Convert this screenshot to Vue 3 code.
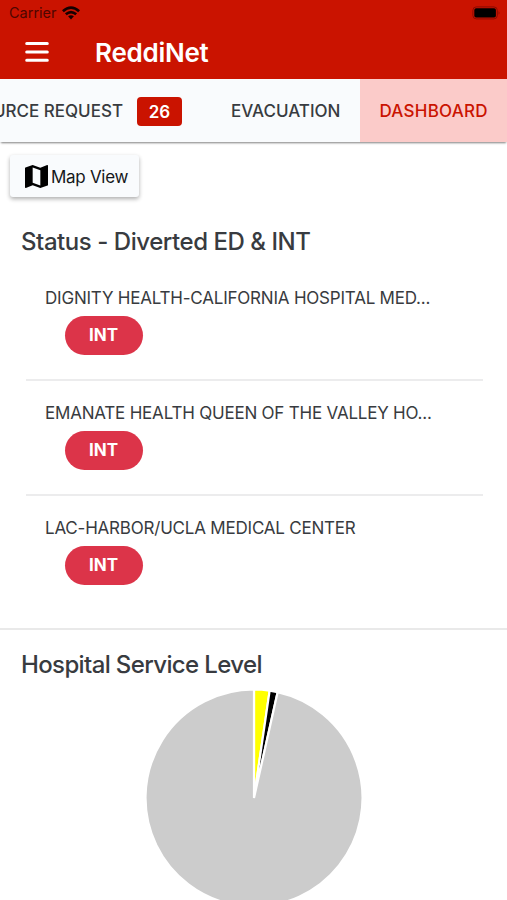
<script setup>
const hospitals = [
  { name: 'DIGNITY HEALTH-CALIFORNIA HOSPITAL MED...', status: 'INT', key: 'dignity' },
  { name: 'EMANATE HEALTH QUEEN OF THE VALLEY HO...', status: 'INT', key: 'emanate' },
  { name: 'LAC-HARBOR/UCLA MEDICAL CENTER', status: 'INT', key: 'lac' },
]

const RADIUS = 108.5
const slices = [
  { from: 0, to: 8.3, color: '#ffff00' },
  { from: 8.3, to: 12.6, color: '#000000' },
  { from: 12.6, to: 360, color: '#cccccc' },
]

function point(angle) {
  const rad = (angle * Math.PI) / 180
  return `${(RADIUS * Math.sin(rad)).toFixed(2)} ${(-RADIUS * Math.cos(rad)).toFixed(2)}`
}

function slicePath({ from, to }) {
  const large = to - from > 180 ? 1 : 0
  return `M0 0L${point(from)}A${RADIUS} ${RADIUS} 0 ${large} 1 ${point(to)}Z`
}
</script>

<template>
  <div class="screen">
    <header class="header">
      <div class="status-bar">
        <span class="carrier">Carrier</span>
        <svg class="wifi" viewBox="0 0 18 14" width="18" height="14">
          <g fill="none" stroke="#160000" stroke-width="2.7">
            <path d="M0.9 5.2Q9 -1.9 17.1 5.2" />
            <path d="M3.8 8.3Q9 4 14.2 8.3" />
          </g>
          <path d="M6.1 10.3Q9 8 11.9 10.3L9 13.4Z" fill="#160000" />
        </svg>
        <svg class="battery" viewBox="0 0 29 14" width="29" height="14">
          <rect x="0.9" y="0.9" width="24.4" height="12" rx="3.4" fill="none" stroke="#8a0b00" stroke-width="1" />
          <rect x="2.3" y="2.3" width="21.6" height="9.2" rx="1.8" fill="#000" />
          <path d="M26.7 5Q28.3 6.9 26.7 8.8Z" fill="#7a0900" />
        </svg>
      </div>
      <div class="title-bar">
        <svg class="menu" viewBox="0 0 24 22" width="24" height="22">
          <path d="M1.7 2.4H22.3M1.7 10.9H22.3M1.7 19.3H22.3" stroke="#fff" stroke-width="3" stroke-linecap="round" />
        </svg>
        <h1 class="title">ReddiNet</h1>
      </div>
    </header>

    <nav class="tabs">
      <div class="tab tab-request">
        <span class="request-label">RESOURCE REQUEST</span>
        <span class="count">26</span>
      </div>
      <div class="tab tab-evacuation"><span>EVACUATION</span></div>
      <div class="tab tab-dashboard"><span>DASHBOARD</span></div>
    </nav>

    <main>
      <button class="map-button">
        <svg viewBox="3 3 18 18" width="23" height="23">
          <path d="M20.5 3l-.16.03L15 5.1 9 3 3.36 4.9c-.21.07-.36.25-.36.48V20.5c0 .28.22.5.5.5l.16-.03L9 18.9l6 2.1 5.64-1.9c.21-.07.36-.25.36-.48V3.5c0-.28-.22-.5-.5-.5zM15 19l-6-2.11V5l6 2.11V19z" />
        </svg>
        <span>Map View</span>
      </button>

      <section class="diverted">
        <h2 class="heading heading-status">Status - Diverted ED &amp; INT</h2>
        <ul class="list">
          <li v-for="h in hospitals" :key="h.key" class="item">
            <span class="name">{{ h.name }}</span>
            <span class="pill">{{ h.status }}</span>
          </li>
        </ul>
      </section>

      <section class="service">
        <h2 class="heading heading-service">Hospital Service Level</h2>
        <svg class="pie" viewBox="-110 -110 220 220" width="220" height="220">
          <path v-for="s in slices" :key="s.from" :d="slicePath(s)" :fill="s.color" stroke="#fff" stroke-width="2.2" />
        </svg>
      </section>
    </main>
  </div>
</template>

<style>
body {
  margin: 0;
  overflow: hidden;
}
</style>

<style scoped>
.screen {
  width: 507px;
  height: 900px;
  overflow: hidden;
  background: #fff;
  color: #383b40;
  font-family: Inter, "Liberation Sans", sans-serif;
}

.header {
  height: 79px;
  background: #ca1300;
}

.status-bar {
  display: flex;
  align-items: center;
  height: 26px;
  padding: 0 6px 0 9px;
}

.carrier {
  color: #4e0600;
  font-size: 14.5px;
  line-height: 26px;
}

.wifi {
  margin-left: 5px;
}

.battery {
  margin-left: auto;
}

.title-bar {
  display: flex;
  align-items: center;
  height: 52px;
  padding-left: 25px;
}

.title {
  margin: 0 0 0 46px;
  color: #fff;
  font-size: 26px;
  font-weight: 600;
  letter-spacing: -0.25px;
  line-height: 50px;
  padding-top: 2px;
}

.tabs {
  position: relative;
  display: flex;
  height: 63px;
  background: #f9fbfd;
  box-shadow: 0 2px 2px -1px rgba(0, 0, 0, 0.5);
}

.tab {
  box-sizing: border-box;
  display: flex;
  align-items: center;
  flex: none;
  padding-top: 1px;
  font-size: 17px;
  font-weight: 500;
  white-space: nowrap;
}

.tab-request {
  justify-content: flex-end;
  width: 211px;
  padding-right: 29px;
  overflow: hidden;
}

.count {
  width: 45px;
  height: 29px;
  margin-left: 14px;
  border-radius: 4px;
  background: #ca1300;
  color: #fff;
  font-weight: 600;
  line-height: 30px;
  text-align: center;
  flex: none;
}

.tab-evacuation {
  width: 149px;
  padding-left: 20px;
}

.tab-dashboard {
  width: 147px;
  padding-left: 19.5px;
  background: #fbcbc9;
  color: #ca1300;
  letter-spacing: 0.22px;
}

.map-button {
  box-sizing: border-box;
  display: flex;
  align-items: center;
  width: 129px;
  height: 42px;
  margin: 13px 0 0 10px;
  padding: 1px 0 0 15px;
  border: 0;
  border-radius: 3px;
  background: #f9fbfd;
  box-shadow: 0 2px 4px rgba(0, 0, 0, 0.32);
  color: #15171a;
  font-family: inherit;
  font-size: 17px;
  letter-spacing: -0.3px;
  white-space: nowrap;
}

.map-button span {
  margin-left: 3px;
}

.heading {
  margin: 0;
  padding-left: 21px;
  font-size: 24px;
  font-weight: 500;
  line-height: 32px;
  white-space: nowrap;
}

.heading-status {
  letter-spacing: -0.45px;
}

.heading-service {
  letter-spacing: -0.63px;
}

.diverted {
  box-sizing: border-box;
  height: 433px;
  padding-top: 29px;
  border-bottom: 2px solid #e9e9e9;
}

.list {
  margin: 20px 24px 0 26px;
  padding: 0;
  list-style: none;
}

.item {
  box-sizing: border-box;
  display: flex;
  flex-direction: column;
  align-items: flex-start;
  height: 115px;
  padding: 8px 0 0 19px;
}

.item:first-child {
  height: 101px;
}

.item + .item {
  padding-top: 20px;
  border-top: 2px solid #ececed;
}

.name {
  font-size: 17px;
  letter-spacing: -0.21px;
  line-height: 24px;
  white-space: nowrap;
}

.pill {
  width: 78px;
  height: 39px;
  margin: 6px 0 0 19.5px;
  border-radius: 20px;
  background: #dc3449;
  color: #fff;
  font-size: 17px;
  font-weight: 700;
  line-height: 39px;
  text-align: center;
}

.service {
  display: flex;
  flex-direction: column;
  padding-top: 19px;
}

.pie {
  display: block;
  margin: 7px 0 0 144px;
}
</style>
